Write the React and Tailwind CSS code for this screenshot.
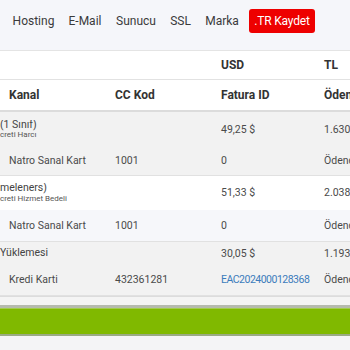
const navItems = [
    { label: 'Hosting', w: 'w-[55px]' },
    { label: 'E-Mail', w: 'w-[48px]' },
    { label: 'Sunucu', w: 'w-[54px]' },
    { label: 'SSL', w: 'w-[35px]' },
    { label: 'Marka', w: 'w-[48px]' },
];

const cols = 'grid grid-cols-[106px_106px_103px_1fr]';

const Cell = ({ children, className = '' }) => (
    <div className={`pl-[9px] whitespace-nowrap ${className}`}>{children}</div>
);

const DescRow = ({ title, sub, usd, tl, h, bg }) => (
    <div className={`${cols} items-center ${h} ${bg}`}>
        <div className="col-span-2 whitespace-nowrap overflow-hidden leading-none">
            <div className="text-[10.5px] text-[#444]">{title}</div>
            {sub && <div className="text-[8px] text-[#555] mt-[1px]">{sub}</div>}
        </div>
        <Cell>{usd}</Cell>
        <Cell>{tl}</Cell>
    </div>
);

const PayRow = ({ kanal, cc, fatura, tl, h, bg, link }) => (
    <div className={`${cols} items-center ${h} ${bg} border-b border-[#e1e1e1]`}>
        <Cell>{kanal}</Cell>
        <Cell>{cc}</Cell>
        <Cell className={link ? 'text-[#3c7cbc] tracking-[-0.5px]' : ''}>{fatura}</Cell>
        <Cell>{tl}</Cell>
    </div>
);

export default function App() {
    return (
        <div className="w-[350px] h-[350px] overflow-hidden bg-[#f4f4f6] font-['Roboto',sans-serif] text-[10.5px] text-[#4a4a4a]">
            {/* top menu */}
            <nav className="h-[50px] bg-[#f5f6fa] flex items-start pt-[9px] pl-[6px]">
                {navItems.map((item) => (
                    <a key={item.label} className={`${item.w} h-[24px] flex items-center justify-center text-[12px] text-[#3a3a3a]`}>
                        {item.label}
                    </a>
                ))}
                <a className="ml-[3px] w-[66px] h-[24px] flex items-center justify-center rounded-[3px] bg-[#ee0000] text-white text-[12px] tracking-[-0.2px]">
                    .TR Kaydet
                </a>
            </nav>

            {/* table */}
            <div className="border-t border-[#e4e4e4] bg-white overflow-hidden">
                <div className={`${cols} h-[29px] items-center border-b border-[#e2e2e2] font-bold text-[12px] text-[#333]`}>
                    <Cell></Cell>
                    <Cell></Cell>
                    <Cell>USD</Cell>
                    <Cell>TL</Cell>
                </div>
                <div className={`${cols} h-[32px] items-center border-b-2 border-[#dcdcdc] font-bold text-[12px] text-[#333]`}>
                    <Cell>Kanal</Cell>
                    <Cell>CC Kod</Cell>
                    <Cell>Fatura ID</Cell>
                    <Cell>Ödeme</Cell>
                </div>

                <DescRow title="(1 Sınıf)" sub="creti Harcı" usd="49,25 $" tl="1.630,00 TL" h="h-[35px]" bg="bg-[#f2f2f2]" />
                <PayRow kanal="Natro Sanal Kart" cc="1001" fatura="0" tl="Ödendi" h="h-[29px]" bg="bg-[#f2f2f2]" />

                <DescRow title="meleners)" sub="creti Hizmet Bedeli" usd="51,33 $" tl="2.038,00 TL" h="h-[34px]" bg="bg-white" />
                <PayRow kanal="Natro Sanal Kart" cc="1001" fatura="0" tl="Ödendi" h="h-[32px]" bg="bg-[#f6f7fa]" />

                <DescRow title="Yüklemesi" usd="30,05 $" tl="1.193,00 TL" h="h-[23px]" bg="bg-[#f2f2f2]" />
                <PayRow kanal="Kredi Karti" cc="432361281" fatura="EAC2024000128368" tl="Ödendi" h="h-[31px]" bg="bg-[#f2f2f2]" link />
            </div>

            <div className="h-[9px] bg-[#f4f4f4] border-t border-[#dcdcdc]"></div>

            {/* green bar */}
            <div className="border-t-[3px] border-[#b6bbae]">
                <div className="h-[28px] bg-[#80b900] border-t border-[#a3cc4e] border-b-2 border-b-[#9aaa84]"></div>
            </div>
        </div>
    );
}
